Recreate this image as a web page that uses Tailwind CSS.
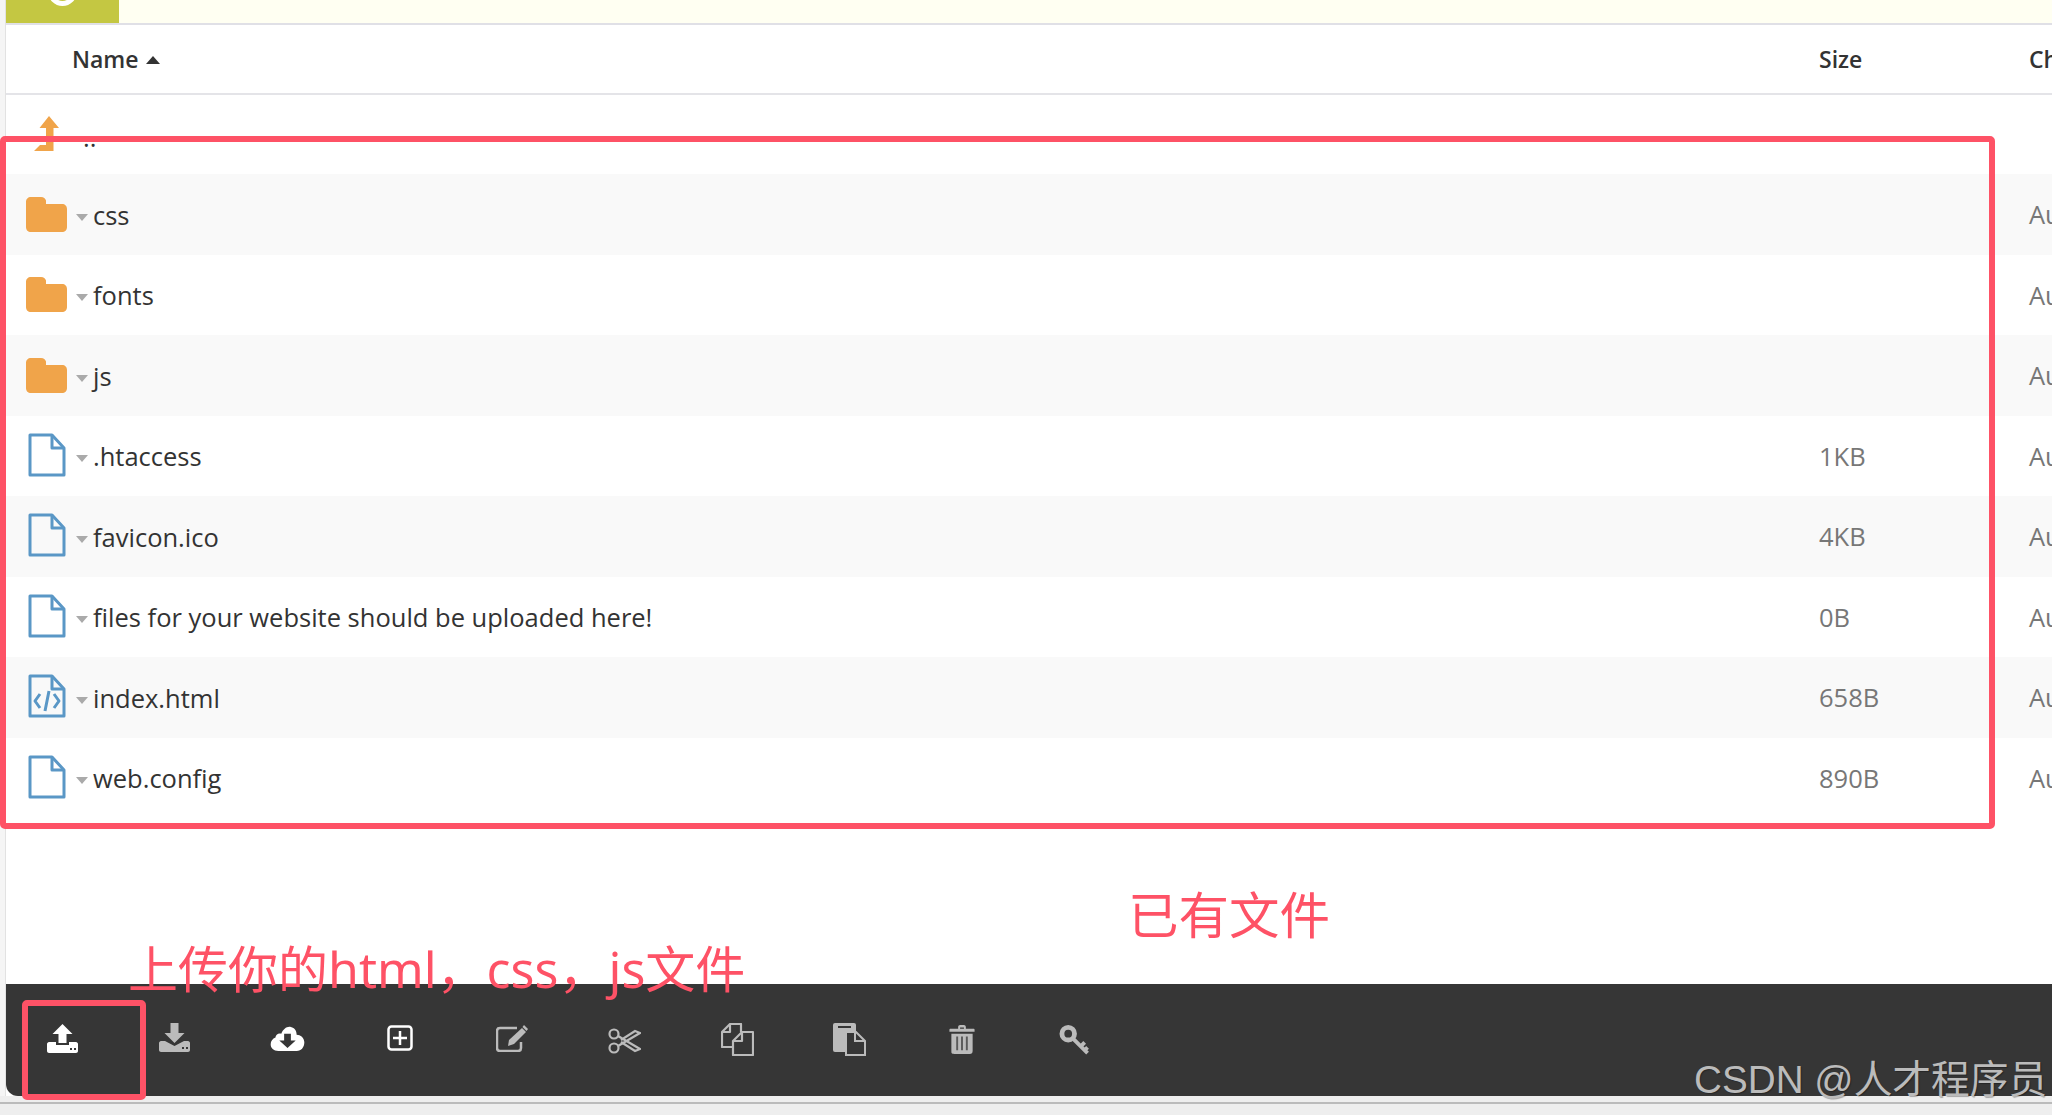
<!DOCTYPE html>
<html lang="en">
<head>
    <meta charset="UTF-8">
    <title>File Manager</title>
    <script src="https://cdn.jsdelivr.net/npm/@tailwindcss/browser@4"></script>
</head>
<body class="relative h-screen overflow-hidden bg-[#eeeeee] font-['Open_Sans',sans-serif] text-[#333333]">
    <div class="flex h-[1096px]">
        <div class="w-[5px] bg-[#f5f5f5] border-r border-[#e2e2e2] box-content"></div>
        <main class="flex min-w-0 flex-1 flex-col bg-white">
            <!-- notice strip -->
            <div class="flex h-[25px] border-b-2 border-[#e0e0e6] bg-[#fffff2]">
                <div class="flex w-[113px] items-start justify-center overflow-hidden bg-[#c4c742] pr-[1px]">
                    <div class="mt-[-23px] size-[29px] shrink-0 rounded-full border-[5px] border-white"></div>
                </div>
            </div>

            <!-- table head -->
            <div class="flex h-[70px] items-center border-b-2 border-[#e4e4e8] text-[23px] font-semibold">
                <div class="flex w-[1813px] shrink-0 items-center pl-[66px]">Name<span class="ml-[7px] mt-[1px] size-0 border-x-[7px] border-b-[8px] border-x-transparent border-b-[#333333]"></span></div>
                <div class="w-[210px] shrink-0">Size</div>
                <div>Ch</div>
            </div>

            <!-- rows -->
            <div class="flex h-[79px] items-center text-[25.5px]">
                <div class="flex w-[1813px] shrink-0 items-center pl-[28px]">
                    <svg class="mt-[-2px] h-[35px] w-[26px]" viewBox="0 0 26 35" fill="#f0a44a"><path d="M15 0l10 12h-5.500v23H0l6-6h6V12H5.500z"/></svg>
                    <span class="ml-[23px] mt-[6px]">..</span>
                </div>
            </div>

            <div class="flex h-[80.5px] items-center bg-[#f9f9f9] text-[25.5px]">
                <div class="flex w-[1813px] shrink-0 items-center pl-[20px]">
                    <svg class="h-[35px] w-[41px]" viewBox="0 0 41 35" fill="#f0a44a"><path d="M5 0h10c3 0 4 1.500 5 3.500V7h16c3 0 5 2 5 5v18c0 3-2 5-5 5H5c-3 0-5-2-5-5V5c0-3 2-5 5-5z"/></svg>
                    <span class="ml-[9px] mt-[6px] size-0 border-x-[6px] border-t-[7px] border-x-transparent border-t-[#aaaaaa]"></span>
                    <span class="ml-[5px] pt-[1px]">css</span>
                </div>
                <div class="w-[210px] shrink-0"></div>
                <div class="text-[#777777]">Au</div>
            </div>
            <div class="flex h-[80.5px] items-center text-[25.5px]">
                <div class="flex w-[1813px] shrink-0 items-center pl-[20px]">
                    <svg class="h-[35px] w-[41px]" viewBox="0 0 41 35" fill="#f0a44a"><path d="M5 0h10c3 0 4 1.500 5 3.500V7h16c3 0 5 2 5 5v18c0 3-2 5-5 5H5c-3 0-5-2-5-5V5c0-3 2-5 5-5z"/></svg>
                    <span class="ml-[9px] mt-[6px] size-0 border-x-[6px] border-t-[7px] border-x-transparent border-t-[#aaaaaa]"></span>
                    <span class="ml-[5px] pt-[1px]">fonts</span>
                </div>
                <div class="w-[210px] shrink-0"></div>
                <div class="text-[#777777]">Au</div>
            </div>
            <div class="flex h-[80.5px] items-center bg-[#f9f9f9] text-[25.5px]">
                <div class="flex w-[1813px] shrink-0 items-center pl-[20px]">
                    <svg class="h-[35px] w-[41px]" viewBox="0 0 41 35" fill="#f0a44a"><path d="M5 0h10c3 0 4 1.500 5 3.500V7h16c3 0 5 2 5 5v18c0 3-2 5-5 5H5c-3 0-5-2-5-5V5c0-3 2-5 5-5z"/></svg>
                    <span class="ml-[9px] mt-[6px] size-0 border-x-[6px] border-t-[7px] border-x-transparent border-t-[#aaaaaa]"></span>
                    <span class="ml-[5px] pt-[1px]">js</span>
                </div>
                <div class="w-[210px] shrink-0"></div>
                <div class="text-[#777777]">Au</div>
            </div>
            <div class="flex h-[80.5px] items-center text-[25.5px]">
                <div class="flex w-[1813px] shrink-0 items-center pl-[22px]">
                    <svg class="mt-[-2px] h-[44px] w-[38px]" viewBox="0 0 38 44" fill="none" stroke="#5a97c6" stroke-width="3" stroke-linejoin="round"><path d="M2 2h22l12 13v27H2z"/><path d="M24 2v13h12"/></svg>
                    <span class="ml-[10px] mt-[6px] size-0 border-x-[6px] border-t-[7px] border-x-transparent border-t-[#aaaaaa]"></span>
                    <span class="ml-[5px] pt-[1px]">.htaccess</span>
                </div>
                <div class="w-[210px] shrink-0 text-[#777777]">1KB</div>
                <div class="text-[#777777]">Au</div>
            </div>
            <div class="flex h-[80.5px] items-center bg-[#f9f9f9] text-[25.5px]">
                <div class="flex w-[1813px] shrink-0 items-center pl-[22px]">
                    <svg class="mt-[-2px] h-[44px] w-[38px]" viewBox="0 0 38 44" fill="none" stroke="#5a97c6" stroke-width="3" stroke-linejoin="round"><path d="M2 2h22l12 13v27H2z"/><path d="M24 2v13h12"/></svg>
                    <span class="ml-[10px] mt-[6px] size-0 border-x-[6px] border-t-[7px] border-x-transparent border-t-[#aaaaaa]"></span>
                    <span class="ml-[5px] pt-[1px]">favicon.ico</span>
                </div>
                <div class="w-[210px] shrink-0 text-[#777777]">4KB</div>
                <div class="text-[#777777]">Au</div>
            </div>
            <div class="flex h-[80.5px] items-center text-[25.5px]">
                <div class="flex w-[1813px] shrink-0 items-center pl-[22px]">
                    <svg class="mt-[-2px] h-[44px] w-[38px]" viewBox="0 0 38 44" fill="none" stroke="#5a97c6" stroke-width="3" stroke-linejoin="round"><path d="M2 2h22l12 13v27H2z"/><path d="M24 2v13h12"/></svg>
                    <span class="ml-[10px] mt-[6px] size-0 border-x-[6px] border-t-[7px] border-x-transparent border-t-[#aaaaaa]"></span>
                    <span class="ml-[5px] pt-[1px]">files for your website should be uploaded here!</span>
                </div>
                <div class="w-[210px] shrink-0 text-[#777777]">0B</div>
                <div class="text-[#777777]">Au</div>
            </div>
            <div class="flex h-[80.5px] items-center bg-[#f9f9f9] text-[25.5px]">
                <div class="flex w-[1813px] shrink-0 items-center pl-[22px]">
                    <svg class="mt-[-2px] h-[44px] w-[38px]" viewBox="0 0 38 44" fill="none" stroke="#5a97c6" stroke-width="3" stroke-linejoin="round"><path d="M2 2h22l12 13v27H2z"/><path d="M24 2v13h12"/><path d="M12 20l-5 7 5 7M26 20l5 7-5 7M21 17l-4 20"/></svg>
                    <span class="ml-[10px] mt-[6px] size-0 border-x-[6px] border-t-[7px] border-x-transparent border-t-[#aaaaaa]"></span>
                    <span class="ml-[5px] pt-[1px]">index.html</span>
                </div>
                <div class="w-[210px] shrink-0 text-[#777777]">658B</div>
                <div class="text-[#777777]">Au</div>
            </div>
            <div class="flex h-[80.5px] items-center text-[25.5px]">
                <div class="flex w-[1813px] shrink-0 items-center pl-[22px]">
                    <svg class="mt-[-2px] h-[44px] w-[38px]" viewBox="0 0 38 44" fill="none" stroke="#5a97c6" stroke-width="3" stroke-linejoin="round"><path d="M2 2h22l12 13v27H2z"/><path d="M24 2v13h12"/></svg>
                    <span class="ml-[10px] mt-[6px] size-0 border-x-[6px] border-t-[7px] border-x-transparent border-t-[#aaaaaa]"></span>
                    <span class="ml-[5px] pt-[1px]">web.config</span>
                </div>
                <div class="w-[210px] shrink-0 text-[#777777]">890B</div>
                <div class="text-[#777777]">Au</div>
            </div>

            <div class="flex-1"></div>

            <!-- toolbar -->
            <div class="flex h-[112px] items-start rounded-bl-[12px] bg-[#363636] pt-[39px]">
                <div class="flex w-[112.5px] justify-center">
                    <svg class="mt-[1px] h-[29px] w-[31px]" viewBox="0 0 31 29" fill="#ffffff"><path d="M15.500 0l10 10h-6v9h-8v-9h-6z"/><path d="M0 20c0-1 1-2 2-2h7v3h13v-3h7c1 0 2 1 2 2v7c0 1-1 2-2 2H2c-1 0-2-1-2-2z"/><rect x="23" y="24" width="2" height="2" fill="#363636"/><rect x="27" y="24" width="2" height="2" fill="#363636"/></svg>
                </div>
                <div class="flex w-[112.5px] justify-center">
                    <svg class="h-[29px] w-[31px]" viewBox="0 0 31 29" fill="#bbbbbb"><path d="M11.500 0h8v10h6l-10 10-10-10h6z"/><path d="M0 20c0-1 1-2 2-2h4l9.500 5 9.500-5h4c1 0 2 1 2 2v7c0 1-1 2-2 2H2c-1 0-2-1-2-2z"/><rect x="23" y="24" width="2" height="2" fill="#363636"/><rect x="27" y="24" width="2" height="2" fill="#363636"/></svg>
                </div>
                <div class="flex w-[112.5px] justify-center">
                    <svg class="mt-[3px] h-[25px] w-[35px]" viewBox="0 0 35 26" fill="#ffffff"><path d="M8 26C3 26 0 23 0 19c0-3 2-6 5-7 0-3 3-5 6-4 2-5 6-8 10-7 4 1 6 4 6 8 4 0 8 3 8 8 0 5-3 9-8 9z"/><path d="M14 8h7v7h5l-8.500 8L9 15h5z" fill="#363636"/></svg>
                </div>
                <div class="flex w-[112.5px] justify-center">
                    <svg class="mt-[2px] h-[26px] w-[26px]" viewBox="0 0 26 26" fill="none" stroke="#ffffff" stroke-width="2.500"><rect x="1.500" y="1.500" width="23" height="23" rx="3"/><path d="M13 6v14M6 13h14"/></svg>
                </div>
                <div class="flex w-[112.5px] justify-center">
                    <svg class="mt-[2px] h-[27px] w-[33px]" viewBox="0 0 33 27" fill="none" stroke="#bbbbbb" stroke-width="2.500"><path d="M25 17v6c0 2-1 3-3 3H4c-2 0-3-1-3-3V6c0-2 1-3 3-3h17"/><path d="M12 21l1-6L26 3l4 4-12 12z" fill="#bbbbbb" stroke="none"/><path d="M28 0l4 4-1.500 2-4-4z" fill="#bbbbbb" stroke="none"/></svg>
                </div>
                <div class="flex w-[112.5px] justify-center">
                    <svg class="mt-[5px] h-[26px] w-[33px]" viewBox="0 0 33 26" fill="none" stroke="#bbbbbb" stroke-width="2.200"><circle cx="6" cy="6" r="4.500"/><circle cx="6" cy="20" r="4.500"/><path d="M10 8l22 13-5 2-14-9M10 18l22-13-5-2-14 9"/></svg>
                </div>
                <div class="flex w-[112.5px] justify-center">
                    <svg class="h-[33px] w-[33px]" viewBox="0 0 33 33" fill="none" stroke="#bbbbbb" stroke-width="2.200" stroke-linejoin="round"><path d="M11 24H1V9l8-8h11v8"/><path d="M9 1v8H1"/><path d="M21 9h11v23H12V18z" fill="#363636"/><path d="M21 9v9h-9"/></svg>
                </div>
                <div class="flex w-[112.5px] justify-center">
                    <svg class="h-[33px] w-[33px]" viewBox="0 0 33 33" fill="#bbbbbb"><rect x="0" y="0" width="23" height="29" rx="2"/><rect x="5" y="3" width="13" height="2" fill="#363636"/><path d="M13 9h10l9 9v14H13z" fill="#363636" stroke="#bbbbbb" stroke-width="2"/><path d="M22 9v9h10" fill="none" stroke="#bbbbbb" stroke-width="2"/></svg>
                </div>
                <div class="flex w-[112.5px] justify-center">
                    <svg class="mt-[2px] h-[29px] w-[26px]" viewBox="0 0 26 30" fill="#bbbbbb"><path d="M9 2c0-1 1-2 2-2h4c1 0 2 1 2 2v2h8c.500 0 1 .500 1 1v2H0V5c0-.500.500-1 1-1h8zm2 .500V4h4V2.500z"/><path d="M2 9h22v18c0 2-1 3-3 3H5c-3 0-3-1-3-3z"/><path d="M8 12v14M13 12v14M18 12v14" stroke="#5a5a5a" stroke-width="2"/></svg>
                </div>
                <div class="flex w-[112.5px] justify-center">
                    <svg class="mt-[2px] h-[30px] w-[31px]" viewBox="0 0 31 31" fill="none" stroke="#bbbbbb"><circle cx="9" cy="9" r="6.500" stroke-width="5"/><path d="M14 14l15 15M22 22l4-4M26 26l3-3" stroke-width="4"/></svg>
                </div>
            </div>
        </main>
    </div>
    <div class="mt-[6px] h-[2px] bg-[#bbbbbb]"></div>

    <!-- red annotations drawn over the screenshot -->
    <div class="absolute left-0 top-[136px] h-[693px] w-[1995px] rounded-[5px] border-[6px] border-[#fe5266]"></div>
    <div class="absolute left-[22px] top-[1000px] h-[100px] w-[124px] rounded-[5px] border-[6px] border-[#fe5266]"></div>
    <div class="absolute left-[128px] top-[934px] whitespace-nowrap font-['Noto_Sans','Noto_Sans_CJK_SC',sans-serif] text-[50px] leading-[70px] text-[#fe5266]">上传你的html，css，js文件</div>
    <div class="absolute left-[1128px] top-[877px] whitespace-nowrap font-['Noto_Sans_CJK_SC',sans-serif] text-[50.5px] leading-[70px] text-[#fe5266]">已有文件</div>
    <div class="absolute left-[1694px] top-[1053px] whitespace-nowrap font-['Liberation_Sans','Noto_Sans_CJK_SC',sans-serif] text-[38.7px] leading-[54px] text-[#bbbbbb] [text-shadow:1px_1px_1px_rgba(0,0,0,0.3)]">CSDN @人才程序员</div>
</body>
</html>
